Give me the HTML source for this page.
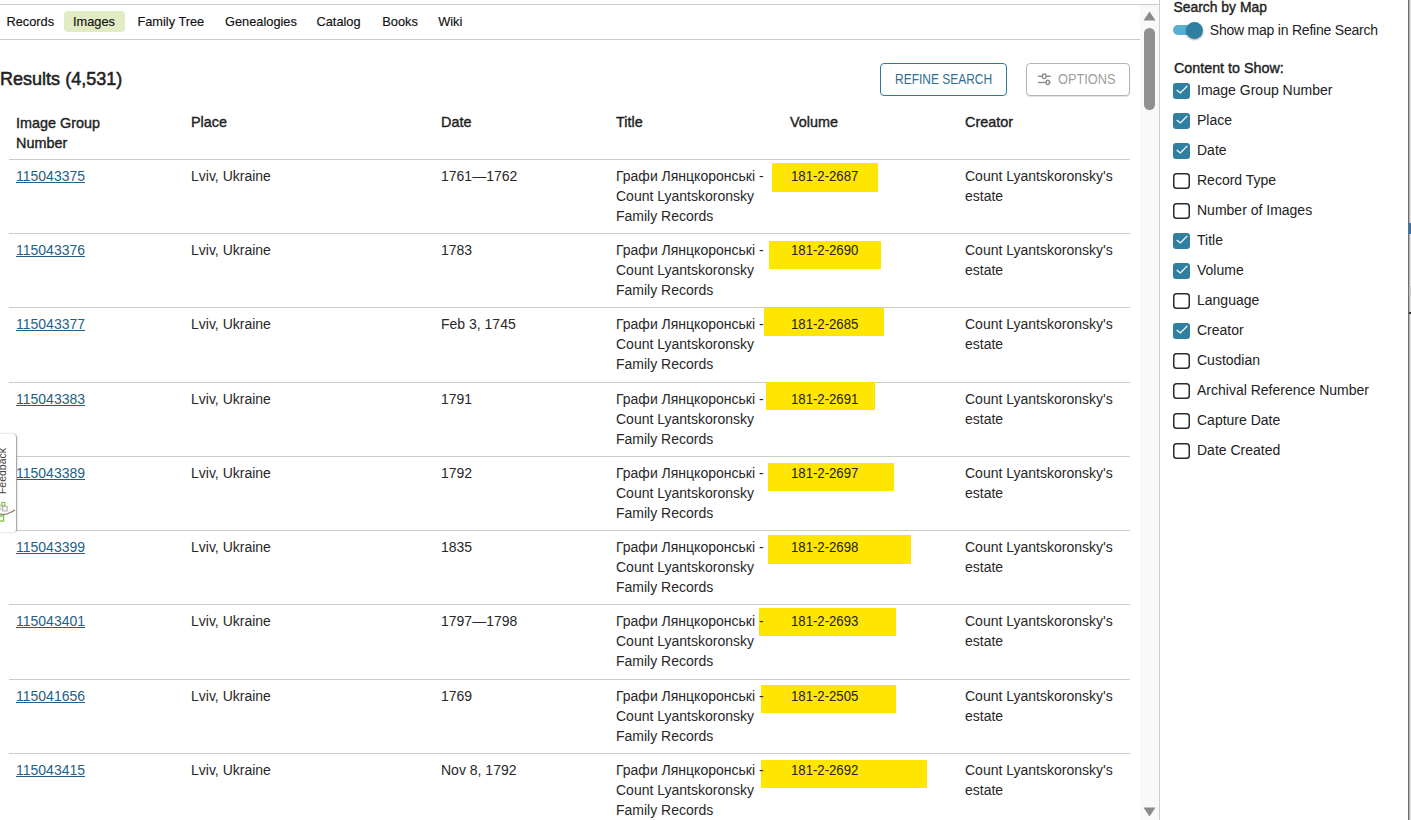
<!DOCTYPE html>
<html><head><meta charset="utf-8"><style>
*{box-sizing:border-box}
html,body{margin:0;padding:0}
body{width:1411px;height:820px;overflow:hidden;position:relative;background:#fff;font-family:"Liberation Sans",sans-serif;color:#282828}
.a{position:absolute}
.t{position:absolute;font-size:14px;line-height:20px;white-space:nowrap;transform:translateY(-15px)}
.hb{font-weight:400;font-size:14.4px;-webkit-text-stroke:0.4px #1f1f1f;color:#1f1f1f}
.nav{position:absolute;font-size:12.8px;line-height:16px;white-space:nowrap;color:#111;-webkit-text-stroke:0.15px #111;transform:translateY(-12.5px)}
.ln{position:absolute;height:1px;background:#cbcdcd}
.lk{color:#245f88;text-decoration:underline;text-underline-offset:1px}
.yb{position:absolute;background:#ffe600}
.cb{position:absolute;width:17px;height:16px;border:2px solid #333;border-radius:3px}
.cb.on{background:#2e7fa0;border-color:#2e7fa0}
.cb.on svg{position:absolute;left:-2px;top:-2px}
</style></head><body>
<div class="ln" style="left:0;top:4px;width:1159px;background:#c9cccb"></div>
<div class="ln" style="left:0;top:39px;width:1140px;background:#c9cccb"></div>
<div class="a" style="left:64px;top:11px;width:61px;height:21px;background:#e1ecc4;border-radius:4px"></div>
<div class="nav" style="left:6.4px;top:26px">Records</div>
<div class="nav" style="left:73px;top:26px">Images</div>
<div class="nav" style="left:137.4px;top:26px">Family Tree</div>
<div class="nav" style="left:225px;top:26px">Genealogies</div>
<div class="nav" style="left:316.5px;top:26px">Catalog</div>
<div class="nav" style="left:382.3px;top:26px">Books</div>
<div class="nav" style="left:438.2px;top:26px">Wiki</div>
<div class="t" style="left:0;top:86px;font-size:18.8px;font-weight:400;-webkit-text-stroke:0.55px #222;color:#222;transform:translateY(-19.5px) scaleX(0.96);transform-origin:0 0;line-height:24px">Results (4,531)</div>
<div class="a" style="left:880px;top:63px;width:127px;height:33px;border:1px solid #2b7aa0;border-radius:4px"></div>
<div class="t" style="left:895px;top:84px;font-size:14px;color:#2b6f94;transform:translateY(-15px) scaleX(0.855);transform-origin:0 0">REFINE SEARCH</div>
<div class="a" style="left:1026px;top:63px;width:104px;height:33px;border:1px solid #b5b5b5;border-radius:4px;box-shadow:0 1px 1px rgba(0,0,0,.12)"></div>
<svg class="a" style="left:1032px;top:68px" width="28" height="24" viewBox="0 0 28 24"><g stroke="#8c8c8c" stroke-width="1.4" fill="none"><line x1="6" y1="8.3" x2="18.7" y2="8.3"/><line x1="6" y1="14.5" x2="18.7" y2="14.5"/><rect x="10.4" y="6" width="3.6" height="4.6" rx="1.6" fill="#fff"/><rect x="14.3" y="12.3" width="3" height="4.3" rx="1.4" fill="#fff"/></g></svg>
<div class="t" style="left:1057.5px;top:84px;font-size:14px;color:#a0a0a0;transform:translateY(-15px) scaleX(0.913);transform-origin:0 0">OPTIONS</div>
<div class="a" style="left:1140px;top:5px;width:19px;height:815px;background:#f8f8f8"></div>
<svg class="a" style="left:1143px;top:11px" width="13" height="10"><polygon points="0.5,9.5 12.5,9.5 6.5,0.5" fill="#8a8a8a"/></svg>
<div class="a" style="left:1144px;top:28px;width:11px;height:82px;background:#8f8f8f;border-radius:6px"></div>
<svg class="a" style="left:1143px;top:807px" width="13" height="10"><polygon points="0.5,0.5 12.5,0.5 6.5,9.5" fill="#8a8a8a"/></svg>
<div class="a" style="left:1159px;top:0;width:1px;height:820px;background:#cccccc"></div>
<div class="a" style="left:1408px;top:0;width:1px;height:820px;background:#6f6f6f"></div><div class="a" style="left:1409px;top:0;width:1px;height:820px;background:#b4b4b4"></div><div class="a" style="left:1410px;top:0;width:1px;height:820px;background:#e6e6e6"></div>
<div class="a" style="left:1409px;top:223px;width:2px;height:11px;background:#3a6fb0"></div><div class="a" style="left:1409px;top:286px;width:2px;height:10px;background:#c8c8c8"></div><div class="a" style="left:1409px;top:312px;width:2px;height:2px;background:#333"></div>
<div class="t hb" style="left:16px;top:128px;">Image Group</div>
<div class="t hb" style="left:191px;top:127px;">Place</div>
<div class="t hb" style="left:441px;top:127px;">Date</div>
<div class="t hb" style="left:616px;top:127px;">Title</div>
<div class="t hb" style="left:790px;top:127px;">Volume</div>
<div class="t hb" style="left:965px;top:127px;">Creator</div>
<div class="t hb" style="left:16px;top:148px;">Number</div>
<div class="ln" style="left:9px;top:158.6px;width:1121px"></div>
<div class="yb" style="left:772px;top:163px;width:106px;height:29px"></div>
<div class="t" style="left:16px;top:180.6px;"><span class="lk">115043375</span></div>
<div class="t" style="left:191px;top:180.6px;">Lviv, Ukraine</div>
<div class="t" style="left:441px;top:180.6px;">1761—1762</div>
<div class="t" style="left:616px;top:180.6px;">Графи Лянцкоронські -</div>
<div class="t" style="left:616px;top:200.6px;">Count Lyantskoronsky</div>
<div class="t" style="left:616px;top:220.6px;">Family Records</div>
<div class="t" style="left:791px;top:180.6px;font-size:14px;color:#222;transform:translateY(-15px) scaleX(0.94);transform-origin:0 0">181-2-2687</div>
<div class="t" style="left:965px;top:180.6px;">Count Lyantskoronsky's</div>
<div class="t" style="left:965px;top:200.6px;">estate</div>
<div class="ln" style="left:9px;top:232.9px;width:1121px"></div>
<div class="yb" style="left:769px;top:241px;width:112px;height:28px"></div>
<div class="t" style="left:16px;top:254.89999999999998px;"><span class="lk">115043376</span></div>
<div class="t" style="left:191px;top:254.89999999999998px;">Lviv, Ukraine</div>
<div class="t" style="left:441px;top:254.89999999999998px;">1783</div>
<div class="t" style="left:616px;top:254.89999999999998px;">Графи Лянцкоронські -</div>
<div class="t" style="left:616px;top:274.9px;">Count Lyantskoronsky</div>
<div class="t" style="left:616px;top:294.9px;">Family Records</div>
<div class="t" style="left:791px;top:254.89999999999998px;font-size:14px;color:#222;transform:translateY(-15px) scaleX(0.94);transform-origin:0 0">181-2-2690</div>
<div class="t" style="left:965px;top:254.89999999999998px;">Count Lyantskoronsky's</div>
<div class="t" style="left:965px;top:274.9px;">estate</div>
<div class="ln" style="left:9px;top:307.2px;width:1121px"></div>
<div class="yb" style="left:764px;top:308px;width:120px;height:28px"></div>
<div class="t" style="left:16px;top:329.2px;"><span class="lk">115043377</span></div>
<div class="t" style="left:191px;top:329.2px;">Lviv, Ukraine</div>
<div class="t" style="left:441px;top:329.2px;">Feb 3, 1745</div>
<div class="t" style="left:616px;top:329.2px;">Графи Лянцкоронські -</div>
<div class="t" style="left:616px;top:349.2px;">Count Lyantskoronsky</div>
<div class="t" style="left:616px;top:369.2px;">Family Records</div>
<div class="t" style="left:791px;top:329.2px;font-size:14px;color:#222;transform:translateY(-15px) scaleX(0.94);transform-origin:0 0">181-2-2685</div>
<div class="t" style="left:965px;top:329.2px;">Count Lyantskoronsky's</div>
<div class="t" style="left:965px;top:349.2px;">estate</div>
<div class="ln" style="left:9px;top:381.5px;width:1121px"></div>
<div class="yb" style="left:766px;top:382px;width:109px;height:28px"></div>
<div class="t" style="left:16px;top:403.5px;"><span class="lk">115043383</span></div>
<div class="t" style="left:191px;top:403.5px;">Lviv, Ukraine</div>
<div class="t" style="left:441px;top:403.5px;">1791</div>
<div class="t" style="left:616px;top:403.5px;">Графи Лянцкоронські -</div>
<div class="t" style="left:616px;top:423.5px;">Count Lyantskoronsky</div>
<div class="t" style="left:616px;top:443.5px;">Family Records</div>
<div class="t" style="left:791px;top:403.5px;font-size:14px;color:#222;transform:translateY(-15px) scaleX(0.94);transform-origin:0 0">181-2-2691</div>
<div class="t" style="left:965px;top:403.5px;">Count Lyantskoronsky's</div>
<div class="t" style="left:965px;top:423.5px;">estate</div>
<div class="ln" style="left:9px;top:455.8px;width:1121px"></div>
<div class="yb" style="left:768px;top:463px;width:126px;height:28px"></div>
<div class="t" style="left:16px;top:477.79999999999995px;"><span class="lk">115043389</span></div>
<div class="t" style="left:191px;top:477.79999999999995px;">Lviv, Ukraine</div>
<div class="t" style="left:441px;top:477.79999999999995px;">1792</div>
<div class="t" style="left:616px;top:477.79999999999995px;">Графи Лянцкоронські -</div>
<div class="t" style="left:616px;top:497.79999999999995px;">Count Lyantskoronsky</div>
<div class="t" style="left:616px;top:517.8px;">Family Records</div>
<div class="t" style="left:791px;top:477.79999999999995px;font-size:14px;color:#222;transform:translateY(-15px) scaleX(0.94);transform-origin:0 0">181-2-2697</div>
<div class="t" style="left:965px;top:477.79999999999995px;">Count Lyantskoronsky's</div>
<div class="t" style="left:965px;top:497.79999999999995px;">estate</div>
<div class="ln" style="left:9px;top:530.1px;width:1121px"></div>
<div class="yb" style="left:768px;top:535px;width:143px;height:29px"></div>
<div class="t" style="left:16px;top:552.1px;"><span class="lk">115043399</span></div>
<div class="t" style="left:191px;top:552.1px;">Lviv, Ukraine</div>
<div class="t" style="left:441px;top:552.1px;">1835</div>
<div class="t" style="left:616px;top:552.1px;">Графи Лянцкоронські -</div>
<div class="t" style="left:616px;top:572.1px;">Count Lyantskoronsky</div>
<div class="t" style="left:616px;top:592.1px;">Family Records</div>
<div class="t" style="left:791px;top:552.1px;font-size:14px;color:#222;transform:translateY(-15px) scaleX(0.94);transform-origin:0 0">181-2-2698</div>
<div class="t" style="left:965px;top:552.1px;">Count Lyantskoronsky's</div>
<div class="t" style="left:965px;top:572.1px;">estate</div>
<div class="ln" style="left:9px;top:604.4px;width:1121px"></div>
<div class="yb" style="left:759px;top:608px;width:137px;height:28px"></div>
<div class="t" style="left:16px;top:626.4px;"><span class="lk">115043401</span></div>
<div class="t" style="left:191px;top:626.4px;">Lviv, Ukraine</div>
<div class="t" style="left:441px;top:626.4px;">1797—1798</div>
<div class="t" style="left:616px;top:626.4px;">Графи Лянцкоронські -</div>
<div class="t" style="left:616px;top:646.4px;">Count Lyantskoronsky</div>
<div class="t" style="left:616px;top:666.4px;">Family Records</div>
<div class="t" style="left:791px;top:626.4px;font-size:14px;color:#222;transform:translateY(-15px) scaleX(0.94);transform-origin:0 0">181-2-2693</div>
<div class="t" style="left:965px;top:626.4px;">Count Lyantskoronsky's</div>
<div class="t" style="left:965px;top:646.4px;">estate</div>
<div class="ln" style="left:9px;top:678.7px;width:1121px"></div>
<div class="yb" style="left:761px;top:685px;width:135px;height:28px"></div>
<div class="t" style="left:16px;top:700.7px;"><span class="lk">115041656</span></div>
<div class="t" style="left:191px;top:700.7px;">Lviv, Ukraine</div>
<div class="t" style="left:441px;top:700.7px;">1769</div>
<div class="t" style="left:616px;top:700.7px;">Графи Лянцкоронські -</div>
<div class="t" style="left:616px;top:720.7px;">Count Lyantskoronsky</div>
<div class="t" style="left:616px;top:740.7px;">Family Records</div>
<div class="t" style="left:791px;top:700.7px;font-size:14px;color:#222;transform:translateY(-15px) scaleX(0.94);transform-origin:0 0">181-2-2505</div>
<div class="t" style="left:965px;top:700.7px;">Count Lyantskoronsky's</div>
<div class="t" style="left:965px;top:720.7px;">estate</div>
<div class="ln" style="left:9px;top:753.0px;width:1121px"></div>
<div class="yb" style="left:761px;top:760px;width:166px;height:28px"></div>
<div class="t" style="left:16px;top:775.0px;"><span class="lk">115043415</span></div>
<div class="t" style="left:191px;top:775.0px;">Lviv, Ukraine</div>
<div class="t" style="left:441px;top:775.0px;">Nov 8, 1792</div>
<div class="t" style="left:616px;top:775.0px;">Графи Лянцкоронські -</div>
<div class="t" style="left:616px;top:795.0px;">Count Lyantskoronsky</div>
<div class="t" style="left:616px;top:815.0px;">Family Records</div>
<div class="t" style="left:791px;top:775.0px;font-size:14px;color:#222;transform:translateY(-15px) scaleX(0.94);transform-origin:0 0">181-2-2692</div>
<div class="t" style="left:965px;top:775.0px;">Count Lyantskoronsky's</div>
<div class="t" style="left:965px;top:795.0px;">estate</div>
<div class="a" style="left:-6px;top:434px;width:23px;height:98px;background:#fff;border-radius:0 4px 3px 0;border-right:1px solid #a9a9a9;box-shadow:0 0 3px rgba(0,0,0,.22)"></div>
<div class="a" style="left:-23px;top:464.5px;width:50px;height:12px;font-size:10.5px;line-height:12px;color:#444;transform:rotate(-90deg);transform-origin:center;white-space:nowrap;text-align:center">Feedback</div>
<svg class="a" style="left:0;top:498px" width="16" height="26" viewBox="0 0 16 26"><rect x="1.8" y="4.5" width="3" height="3" fill="none" stroke="#7cc144" stroke-width="1.1"/><rect x="2.6" y="8.5" width="4.6" height="4.4" fill="none" stroke="#b5b5b5" stroke-width="1.2"/><rect x="-2" y="7" width="3" height="5" fill="none" stroke="#c0c0c0" stroke-width="1"/><path d="M-1 15.5 Q4 17.5 8 15.5 Q12 14 15 12" fill="none" stroke="#8c8468" stroke-width="1.3"/><rect x="-2" y="18" width="5.6" height="5" fill="none" stroke="#7cc144" stroke-width="1.3"/></svg>
<div class="t hb" style="left:1173.5px;top:12px;font-size:13.9px">Search by Map</div>
<div class="a" style="left:1173px;top:25px;width:26px;height:10px;border-radius:5px;background:#58afd2"></div>
<div class="a" style="left:1186px;top:21.5px;width:17px;height:17px;border-radius:50%;background:#2e7fa0;box-shadow:0 1px 2px rgba(0,0,0,.35)"></div>
<div class="t" style="left:1209.8px;top:35px;font-size:14px;letter-spacing:-0.22px;color:#222">Show map in Refine Search</div>
<div class="t hb" style="left:1174px;top:72.5px;font-size:14.3px">Content to Show:</div>
<svg class="a" style="left:1173px;top:83px" width="17" height="16" viewBox="0 0 17 16"><rect x="0" y="0" width="17" height="16" rx="3" fill="#2e7fa0"/><polyline points="3.7,6.9 7.4,9.9 14.3,2.9" fill="none" stroke="#fff" stroke-width="1.3"/></svg>
<div class="t" style="left:1197px;top:95px;color:#222">Image Group Number</div>
<svg class="a" style="left:1173px;top:113px" width="17" height="16" viewBox="0 0 17 16"><rect x="0" y="0" width="17" height="16" rx="3" fill="#2e7fa0"/><polyline points="3.7,6.9 7.4,9.9 14.3,2.9" fill="none" stroke="#fff" stroke-width="1.3"/></svg>
<div class="t" style="left:1197px;top:125px;color:#222">Place</div>
<svg class="a" style="left:1173px;top:143px" width="17" height="16" viewBox="0 0 17 16"><rect x="0" y="0" width="17" height="16" rx="3" fill="#2e7fa0"/><polyline points="3.7,6.9 7.4,9.9 14.3,2.9" fill="none" stroke="#fff" stroke-width="1.3"/></svg>
<div class="t" style="left:1197px;top:155px;color:#222">Date</div>
<svg class="a" style="left:1173px;top:173px" width="17" height="16" viewBox="0 0 17 16"><rect x="0.75" y="0.75" width="15.5" height="14.5" rx="2.8" fill="none" stroke="#2b2b2b" stroke-width="1.5"/></svg>
<div class="t" style="left:1197px;top:185px;color:#222">Record Type</div>
<svg class="a" style="left:1173px;top:203px" width="17" height="16" viewBox="0 0 17 16"><rect x="0.75" y="0.75" width="15.5" height="14.5" rx="2.8" fill="none" stroke="#2b2b2b" stroke-width="1.5"/></svg>
<div class="t" style="left:1197px;top:215px;color:#222">Number of Images</div>
<svg class="a" style="left:1173px;top:233px" width="17" height="16" viewBox="0 0 17 16"><rect x="0" y="0" width="17" height="16" rx="3" fill="#2e7fa0"/><polyline points="3.7,6.9 7.4,9.9 14.3,2.9" fill="none" stroke="#fff" stroke-width="1.3"/></svg>
<div class="t" style="left:1197px;top:245px;color:#222">Title</div>
<svg class="a" style="left:1173px;top:263px" width="17" height="16" viewBox="0 0 17 16"><rect x="0" y="0" width="17" height="16" rx="3" fill="#2e7fa0"/><polyline points="3.7,6.9 7.4,9.9 14.3,2.9" fill="none" stroke="#fff" stroke-width="1.3"/></svg>
<div class="t" style="left:1197px;top:275px;color:#222">Volume</div>
<svg class="a" style="left:1173px;top:293px" width="17" height="16" viewBox="0 0 17 16"><rect x="0.75" y="0.75" width="15.5" height="14.5" rx="2.8" fill="none" stroke="#2b2b2b" stroke-width="1.5"/></svg>
<div class="t" style="left:1197px;top:305px;color:#222">Language</div>
<svg class="a" style="left:1173px;top:323px" width="17" height="16" viewBox="0 0 17 16"><rect x="0" y="0" width="17" height="16" rx="3" fill="#2e7fa0"/><polyline points="3.7,6.9 7.4,9.9 14.3,2.9" fill="none" stroke="#fff" stroke-width="1.3"/></svg>
<div class="t" style="left:1197px;top:335px;color:#222">Creator</div>
<svg class="a" style="left:1173px;top:353px" width="17" height="16" viewBox="0 0 17 16"><rect x="0.75" y="0.75" width="15.5" height="14.5" rx="2.8" fill="none" stroke="#2b2b2b" stroke-width="1.5"/></svg>
<div class="t" style="left:1197px;top:365px;color:#222">Custodian</div>
<svg class="a" style="left:1173px;top:383px" width="17" height="16" viewBox="0 0 17 16"><rect x="0.75" y="0.75" width="15.5" height="14.5" rx="2.8" fill="none" stroke="#2b2b2b" stroke-width="1.5"/></svg>
<div class="t" style="left:1197px;top:395px;color:#222">Archival Reference Number</div>
<svg class="a" style="left:1173px;top:413px" width="17" height="16" viewBox="0 0 17 16"><rect x="0.75" y="0.75" width="15.5" height="14.5" rx="2.8" fill="none" stroke="#2b2b2b" stroke-width="1.5"/></svg>
<div class="t" style="left:1197px;top:425px;color:#222">Capture Date</div>
<svg class="a" style="left:1173px;top:443px" width="17" height="16" viewBox="0 0 17 16"><rect x="0.75" y="0.75" width="15.5" height="14.5" rx="2.8" fill="none" stroke="#2b2b2b" stroke-width="1.5"/></svg>
<div class="t" style="left:1197px;top:455px;color:#222">Date Created</div>
</body></html>
